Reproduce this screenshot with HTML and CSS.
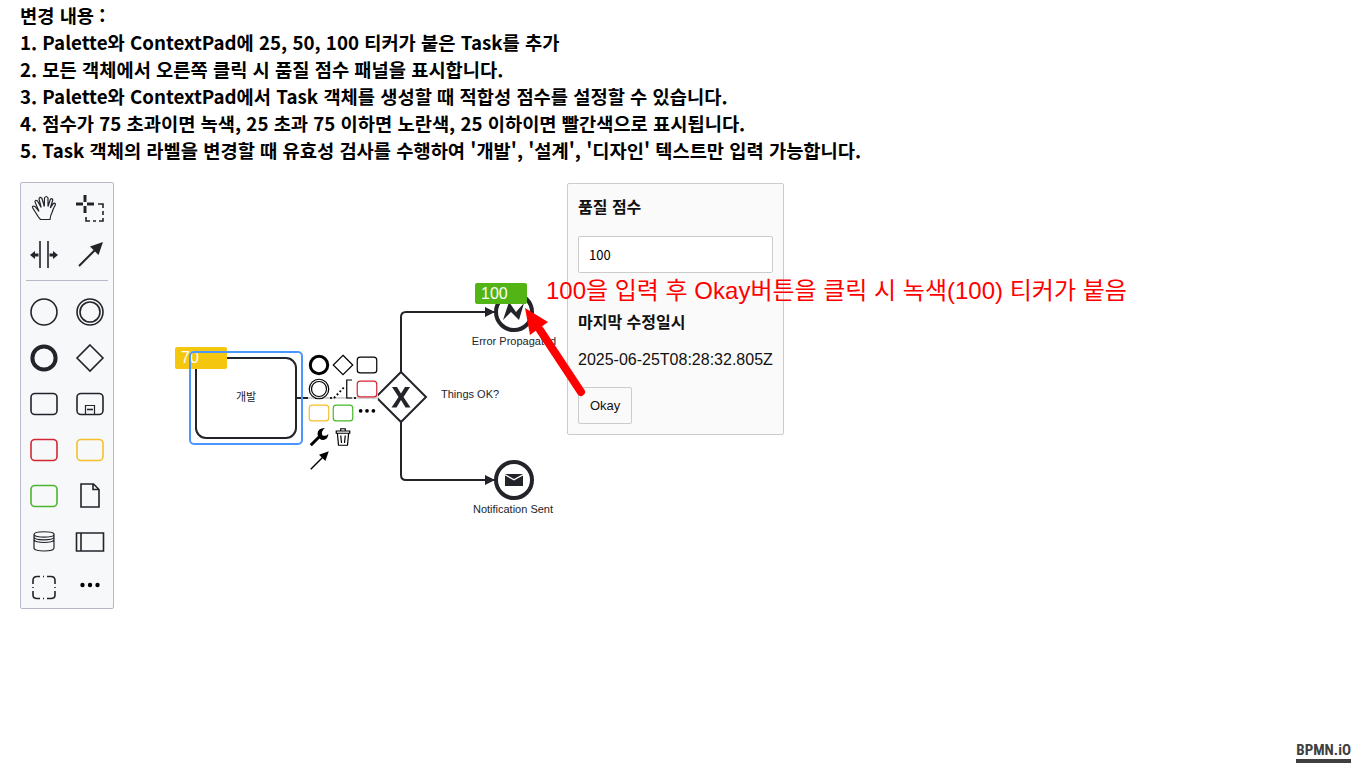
FILE: index.html
```html
<!DOCTYPE html>
<html lang="ko">
<head>
<meta charset="utf-8">
<title>BPMN Modeler</title>
<link rel="stylesheet" href="styles.css">
</head>
<body>
<svg class="symbols" aria-hidden="true">
  <symbol id="hand" viewBox="-16 -16 32 32"><path class="thin" d="M-3.500 10.500H6Q6.500 6 8 3.500Q9 0 11.500-4.500Q11-7 9-5L6.300-1L8.800-9Q8-11.500 6.300-9.500L4-2.500L4-11Q2.200-14 .5-11L.3-2.500L-2-10.500Q-4.500-13-5-10L-2.800-1.500L-6.500-8Q-9-9.500-9-7L-5 2.500L-9-2.500Q-12-3.500-11.500-1.500L-7.500 5Q-5.500 8.500-3.500 10.500Z"/></symbol>
  <symbol id="lasso" viewBox="-16 -16 32 32"><path class="bold" d="M-14-5h7M-3-5h7M-5-14v7M-5-3v7"/><path class="line" d="M8-5h5v4M13 2v4M13 9v3h-4M6 12h-3M0 12h-4v-4"/></symbol>
  <symbol id="space" viewBox="-16 -16 32 32"><path class="line" d="M-4-14v27M4-14v27"/><path class="solid" d="M-14 0l5-4v2.500h3.500v3h-3.500v2.500zM14 0l-5-4v2.500h-3.500v3h3.500v2.500z"/></symbol>
  <symbol id="connect" viewBox="-16 -16 32 32"><path class="mid" d="M-11 11L5-5"/><path class="solid" d="M13-13L8.500 0L0-8.500Z"/></symbol>
  <symbol id="start" viewBox="-16 -16 32 32"><circle class="line" r="13"/></symbol>
  <symbol id="inter" viewBox="-16 -16 32 32"><circle class="line" r="13"/><circle class="line" r="10"/></symbol>
  <symbol id="end" viewBox="-16 -16 32 32"><circle class="heavy" r="11.600"/></symbol>
  <symbol id="gateway" viewBox="-16 -16 32 32"><path class="line" d="M0-13L13 0L0 13L-13 0Z"/></symbol>
  <symbol id="task" viewBox="-16 -16 32 32"><rect class="line" x="-13" y="-10.500" width="26" height="21" rx="4"/></symbol>
  <symbol id="sub" viewBox="-16 -16 32 32"><rect class="line" x="-13" y="-10.500" width="26" height="21" rx="4"/><path class="thin" d="M-4.500 10V1.500h9V10"/><path class="line" d="M-3 5.500h6"/></symbol>
  <symbol id="data" viewBox="-16 -16 32 32"><path class="line" d="M-9-12H3.500L9-6.500V11H-9ZM3-12V-6.500H9"/></symbol>
  <symbol id="store" viewBox="-16 -16 32 32"><path class="thin" d="M-10-7.500C-10-11.200 10-11.200 10-7.500V6C10 10 -10 10 -10 6ZM-10-7.500C-10-4 10-4 10-7.500M-10-5C-10-1.200 10-1.200 10-5M-10-2.500C-10 1.500 10 1.500 10-2.500"/></symbol>
  <symbol id="pool" viewBox="-16 -16 32 32"><path class="line" d="M-13.500-9h27V9h-27ZM-9-9V9"/></symbol>
  <symbol id="group" viewBox="-16 -16 32 32"><path class="line" d="M-11-4V-7.500Q-11-11.500-7-11.500H-4M-1-11.500h1M3-11.500H7Q11-11.500 11-7.500V-4M11-1v1M11 3V7Q11 10.500 7 10.500H3M0 10.500h-1M-4 10.500H-7Q-11 10.500-11 7V3M-11 0v-1"/></symbol>
  <symbol id="more" viewBox="-16 -16 32 32"><circle cx="-7.500" cy="-3" r="2.200"/><circle cy="-3" r="2.200"/><circle cx="7.500" cy="-3" r="2.200"/></symbol>
  <symbol id="more-wide" viewBox="-16 -16 32 32"><circle cx="-8.500" cy="-3" r="2.500"/><circle cy="-3" r="2.500"/><circle cx="8.500" cy="-3" r="2.500"/></symbol>
  <symbol id="note" viewBox="-16 -16 32 32"><path class="line" d="M12-12H5V12H12"/><path class="dots" d="M-12 12L3-4"/></symbol>
  <symbol id="wrench" viewBox="-16 -16 32 32"><path class="heavy" d="M-11 11L1-1"/><path class="solid" d="M8-12Q-2-12-2-4Q-1 4 6 4Q12 3 12.500-4Q8 0 4.500-2.500Q2-7 8-12Z"/></symbol>
  <symbol id="trash" viewBox="-16 -16 32 32"><path class="line" d="M-9-8H9V-5H-9ZM-3-8V-11H3V-8M-7.500-5L-6 11H6L7.500-5M-3-2L-2 8M3-2L2 8"/></symbol>
</svg>

<header class="changes">
  <h3 class="changes-text">변경 내용 :<br>
  1. Palette와 ContextPad에 25, 50, 100 티커가 붙은 Task를 추가<br>
  2. 모든 객체에서 오른쪽 클릭 시 품질 점수 패널을 표시합니다.<br>
  3. Palette와 ContextPad에서 Task 객체를 생성할 때 적합성 점수를 설정할 수 있습니다.<br>
  4. 점수가 75 초과이면 녹색, 25 초과 75 이하면 노란색, 25 이하이면 빨간색으로 표시됩니다.<br>
  5. Task 객체의 라벨을 변경할 때 유효성 검사를 수행하여 '개발', '설계', '디자인' 텍스트만 입력 가능합니다.</h3>
</header>

<main class="modeler">
  <nav class="palette" aria-label="Palette">
    <div class="palette-group">
      <button class="tool" aria-label="Hand tool"><svg class="icon"><use href="#hand"/></svg></button>
      <button class="tool" aria-label="Lasso tool"><svg class="icon"><use href="#lasso"/></svg></button>
      <button class="tool" aria-label="Space tool"><svg class="icon"><use href="#space"/></svg></button>
      <button class="tool" aria-label="Connect"><svg class="icon"><use href="#connect"/></svg></button>
    </div>
    <hr class="separator">
    <div class="palette-group">
      <button class="tool" aria-label="Start event"><svg class="icon"><use href="#start"/></svg></button>
      <button class="tool" aria-label="Intermediate event"><svg class="icon"><use href="#inter"/></svg></button>
      <button class="tool" aria-label="End event"><svg class="icon"><use href="#end"/></svg></button>
      <button class="tool" aria-label="Gateway"><svg class="icon"><use href="#gateway"/></svg></button>
      <button class="tool" aria-label="Task"><svg class="icon"><use href="#task"/></svg></button>
      <button class="tool" aria-label="Sub process"><svg class="icon"><use href="#sub"/></svg></button>
      <button class="tool red" aria-label="Task 25"><svg class="icon"><use href="#task"/></svg></button>
      <button class="tool yellow" aria-label="Task 50"><svg class="icon"><use href="#task"/></svg></button>
      <button class="tool green" aria-label="Task 100"><svg class="icon"><use href="#task"/></svg></button>
      <button class="tool" aria-label="Data object"><svg class="icon"><use href="#data"/></svg></button>
      <button class="tool" aria-label="Data store"><svg class="icon"><use href="#store"/></svg></button>
      <button class="tool" aria-label="Participant"><svg class="icon"><use href="#pool"/></svg></button>
      <button class="tool" aria-label="Group"><svg class="icon"><use href="#group"/></svg></button>
      <button class="tool black" aria-label="More elements"><svg class="icon"><use href="#more"/></svg></button>
    </div>
  </nav>

  <section class="canvas">
    <svg class="diagram">
      <defs>
        <marker id="arrow" viewBox="0 0 10 10" refX="10" refY="5" markerWidth="10" markerHeight="10" markerUnits="userSpaceOnUse" orient="auto"><path class="solid" d="M0 0L10 5L0 10Z"/></marker>
      </defs>
      <path class="flow" d="M183 216H262"/>
      <path class="flow arrowed" d="M287 190V135Q287 130 292 130H381"/>
      <path class="flow arrowed" d="M287 240V293Q287 298 292 298H381"/>
      <rect class="shape" x="82" y="176" width="100" height="80" rx="10"/>
      <text class="label middle" x="132" y="219">개발</text>
      <path class="shape" d="M287 190L312 215L287 240L262 215Z"/>
      <path class="solid" d="M278 205h5l4 6.500l4-6.500h5l-6.500 10l7 10.500h-5l-4.500-7.500l-4.500 7.500h-5l7-10.500Z"/>
      <text class="label" x="327" y="216">Things OK?</text>
      <circle class="event" cx="400" cy="130" r="18"/>
      <path class="solid" d="M389 138L395 120L402 130L410 121L405 138L397 130Z"/>
      <text class="label middle" x="400" y="163">Error Propagated</text>
      <circle class="event" cx="400" cy="298" r="18"/>
      <path class="solid" d="M391 292H409L400 297ZM391 293.500L400 298.500L409 293.500V304H391Z"/>
      <text class="label middle" x="399" y="331">Notification Sent</text>
      <rect class="yellow-fill" x="61" y="165" width="52" height="22" rx="2"/>
      <text class="ticker" x="67" y="181">70</text>
      <rect class="green-fill" x="361" y="101" width="52" height="21" rx="2"/>
      <text class="ticker" x="367" y="117">100</text>
      <rect class="selection" x="76" y="170" width="112" height="92" rx="4"/>
    </svg>

    <div class="context-pad">
      <button class="entry" aria-label="Append end event"><svg class="small-icon"><use href="#end"/></svg></button>
      <button class="entry" aria-label="Append gateway"><svg class="small-icon"><use href="#gateway"/></svg></button>
      <button class="entry" aria-label="Append task"><svg class="small-icon"><use href="#task"/></svg></button>
      <button class="entry" aria-label="Append intermediate event"><svg class="small-icon"><use href="#inter"/></svg></button>
      <button class="entry" aria-label="Add text annotation"><svg class="small-icon"><use href="#note"/></svg></button>
      <button class="entry red" aria-label="Append task 25"><svg class="small-icon"><use href="#task"/></svg></button>
      <button class="entry yellow" aria-label="Append task 50"><svg class="small-icon"><use href="#task"/></svg></button>
      <button class="entry green" aria-label="Append task 100"><svg class="small-icon"><use href="#task"/></svg></button>
      <button class="entry" aria-label="Append element"><svg class="small-icon"><use href="#more-wide"/></svg></button>
      <button class="entry" aria-label="Change element"><svg class="small-icon"><use href="#wrench"/></svg></button>
      <button class="entry" aria-label="Delete"><svg class="small-icon"><use href="#trash"/></svg></button>
      <button class="entry connect" aria-label="Connect to other element"><svg class="small-icon"><use href="#connect"/></svg></button>
    </div>

    <form class="quality-panel">
      <label class="panel-title" for="score">품질 점수</label>
      <input class="score" id="score" type="text" value="100" size="1">
      <h2 class="panel-title">마지막 수정일시</h2>
      <time class="modified">2025-06-25T08:28:32.805Z</time>
      <button class="okay" type="button">Okay</button>
    </form>

    <svg class="pointer" aria-hidden="true"><path class="pointer-shaft" d="M56 84L15 22"/><path class="pointer-head" d="M0 0L23 14L5 27Z"/></svg>
    <p class="annotation">100을 입력 후 Okay버튼을 클릭 시 녹색(100) 티커가 붙음</p>
  </section>
</main>
<a class="logo" href="#">BPMN.iO</a>
</body>
</html>
```
FILE: styles.css
```css
* { box-sizing: border-box; }
body {
  display: flex;
  flex-direction: column;
  min-height: 100vh;
  margin: 0;
  background: #fff;
  color: #000;
  font-family: "Liberation Sans", "Noto Sans CJK KR", sans-serif;
}
button { border: 0; padding: 0; font: inherit; }
.symbols { position: absolute; width: 0; height: 0; }
.changes { padding: 1px 20px 19px; }
.changes-text {
  margin: 0;
  font-family: "Noto Sans CJK KR", sans-serif;
  line-height: 27px;
}
.modeler { display: flex; flex: 1; align-items: flex-start; padding-left: 20px; }
.palette {
  flex: none;
  background: #f6f8fa;
  border: 1px solid #b7b8c9;
  border-radius: 2px;
  color: #22242a;
}
.palette-group { display: grid; grid-template-columns: 46px 46px; }
.tool {
  display: grid;
  place-items: center;
  height: 46px;
  padding-top: 5px;
  background: none;
  color: inherit;
}
.separator { height: 1px; margin: 5px; border: 0; background: #b7b8c9; }
.icon { width: 32px; height: 32px; }
.small-icon { width: 24px; height: 24px; }
.tool.red, .entry.red { color: #d22733; }
.tool.yellow, .entry.yellow { color: #f5c02c; }
.tool.green, .entry.green { color: #49b72b; }
.tool.black { color: #000; }
.icon, .small-icon { fill: currentColor; }
.thin, .line, .mid, .bold, .heavy, .dots { fill: none; stroke: currentColor; }
.thin { stroke-width: 1.2; }
.line { stroke-width: 1.6; }
.mid { stroke-width: 2; }
.bold { stroke-width: 3; }
.heavy { stroke-width: 4; }
.dots { stroke-width: 2.5; stroke-dasharray: 2.5 3; }
.solid { fill: currentColor; }
.canvas { position: relative; flex: 1; align-self: stretch; min-height: 427px; }
.diagram { display: block; width: 100%; height: 427px; color: #22242a; }
.flow { fill: none; stroke: #22242a; stroke-width: 2; }
.flow.arrowed { marker-end: url(#arrow); }
.shape { fill: #fff; stroke: #22242a; stroke-width: 2; }
.event { fill: #fff; stroke: #22242a; stroke-width: 4; }
.selection { fill: none; stroke: #4b96ff; stroke-width: 2; }
.label { font-size: 11px; fill: #22242a; }
.middle { text-anchor: middle; }
.ticker { font-size: 16px; fill: #fff; }
.yellow-fill { fill: #f4c60d; }
.green-fill { fill: #52b415; }
.context-pad {
  position: absolute;
  left: 194px;
  top: 172px;
  display: grid;
  grid-template-columns: repeat(3, 22px);
  grid-auto-rows: 22px;
  gap: 2px;
}
.entry {
  display: grid;
  place-content: center;
  background: rgba(255, 255, 255, .8);
  color: #000;
}
.entry.connect { grid-column: 1; }
.quality-panel {
  position: absolute;
  left: 453px;
  top: 1px;
  display: flex;
  flex-direction: column;
  align-items: flex-start;
  padding: 10px;
  background: #fafafa;
  border: 1px solid #ccc;
  border-radius: 2px;
  color: #111;
}
.panel-title { margin: 0; font-size: 16px; font-weight: 700; line-height: 28px; }
.score {
  width: 100%;
  height: 37px;
  margin: 14px 0 36px;
  padding: 0 10px;
  border: 1px solid #ccc;
  border-radius: 2px;
  background: #fff;
  font: 13px "Noto Sans CJK KR", sans-serif;
}
.modified { margin: 13px 0 17px; font-size: 16px; line-height: 20px; }
.okay {
  height: 37px;
  padding: 0 11px;
  border: 1px solid #ccc;
  border-radius: 2px;
  background: #fafafa;
  color: #111;
  font-size: 13px;
}
.pointer { position: absolute; left: 411px; top: 126px; width: 64px; height: 92px; }
.pointer-shaft { stroke: #f00; stroke-width: 8; stroke-linecap: round; }
.pointer-head { fill: #f00; }
.annotation {
  position: absolute;
  left: 432px;
  top: 91px;
  margin: 0;
  color: #f00;
  font-size: 24px;
  line-height: 36px;
  white-space: nowrap;
}
.logo {
  position: absolute;
  right: 15px;
  bottom: 16px;
  border-bottom: 4px solid #404040;
  color: #404040;
  font: 700 15px/18px "Roboto Condensed", Roboto, sans-serif;
  text-decoration: none;
}
```
